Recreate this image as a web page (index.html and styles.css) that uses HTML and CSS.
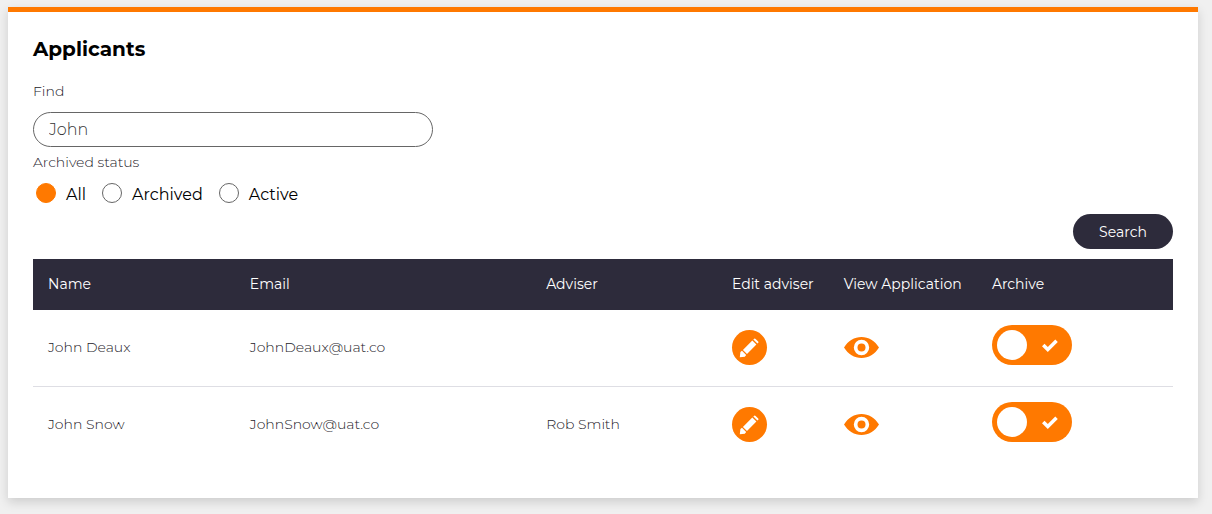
FILE: index.html
```html
<!DOCTYPE html>
<html lang="en">
<head>
<meta charset="utf-8">
<meta name="viewport" content="width=device-width, initial-scale=1">
<title>Applicants</title>
<link rel="stylesheet" href="styles.css">
</head>
<body>
<svg class="sprite" aria-hidden="true">
  <symbol id="pencil" viewBox="0 0 35 35">
    <path d="M7.800 27.200 8.400 22 10 20.800 14.200 25 12.800 26.800Z M10.900 19.900 20.300 10.500 24.400 14.600 15 24Z M21.300 9.500 22.200 8.700Q22.900 8.200 23.600 8.900L26.200 11.500Q26.800 12.200 26.300 12.800L25.400 13.600Z"/>
  </symbol>
  <symbol id="eye" viewBox="0 0 35 21">
    <path fill-rule="evenodd" d="M0 10.500C4 4 10.500 0 17.500 0S31 4 35 10.500C31 17 24.500 21 17.500 21S4 17 0 10.500ZM17.500 2.800a7.700 7.700 0 1 0 0 15.400a7.700 7.700 0 1 0 0-15.400Z"/>
    <circle cx="17.500" cy="10.500" r="4"/>
  </symbol>
  <symbol id="tick" viewBox="0 0 16 13">
    <path d="M0 7.300 2.500 4.800 5.800 8 13.300 0.500 15.800 2.900 5.800 12.900Z"/>
  </symbol>
</svg>
<main class="card">
  <h1 class="title">Applicants</h1>
  <form class="filters">
    <label class="label" for="find">Find</label>
    <input class="field" id="find" type="text" value="John">
    <fieldset class="status">
      <legend class="label">Archived status</legend>
      <div class="options">
        <label class="option"><input class="radio" type="radio" name="status" checked>All</label>
        <label class="option"><input class="radio" type="radio" name="status">Archived</label>
        <label class="option"><input class="radio" type="radio" name="status">Active</label>
      </div>
    </fieldset>
    <button class="search" type="button">Search</button>
  </form>
  <table class="table">
    <colgroup>
      <col class="col-name"><col class="col-email"><col class="col-adviser"><col class="col-edit"><col class="col-view"><col>
    </colgroup>
    <thead>
      <tr><th>Name</th><th>Email</th><th>Adviser</th><th>Edit adviser</th><th>View Application</th><th>Archive</th></tr>
    </thead>
    <tbody>
      <tr>
        <td>John Deaux</td><td>JohnDeaux@uat.co</td><td></td>
        <td><button class="edit" type="button" aria-label="Edit adviser for John Deaux"><svg><use href="#pencil"/></svg></button></td>
        <td><a class="view" href="#deaux" aria-label="View application of John Deaux"><svg><use href="#eye"/></svg></a></td>
        <td><label class="switch"><input class="toggle" type="checkbox" checked aria-label="Archive John Deaux"><svg class="tick"><use href="#tick"/></svg></label></td>
      </tr>
      <tr>
        <td>John Snow</td><td>JohnSnow@uat.co</td><td>Rob Smith</td>
        <td><button class="edit" type="button" aria-label="Edit adviser for John Snow"><svg><use href="#pencil"/></svg></button></td>
        <td><a class="view" href="#snow" aria-label="View application of John Snow"><svg><use href="#eye"/></svg></a></td>
        <td><label class="switch"><input class="toggle" type="checkbox" checked aria-label="Archive John Snow"><svg class="tick"><use href="#tick"/></svg></label></td>
      </tr>
    </tbody>
  </table>
</main>
</body>
</html>
```
FILE: styles.css
```css
* { box-sizing: border-box; }
body {
  margin: 0;
  padding: 7px 14px 16px 8px;
  background: #f0f0f0;
  color: #1c1a28;
  font-family: Montserrat, Inter, "Open Sans", sans-serif;
  font-size: 14px;
  font-weight: 300;
  line-height: 20px;
}
.sprite { display: none; }
.card {
  padding: 25px 25px 35px;
  border-top: 5px solid #ff7900;
  background: #fff;
  box-shadow: 0 4px 10px rgba(0, 0, 0, .15);
}
.title {
  margin: 0 0 20px;
  color: #000;
  font-size: 20px;
  font-weight: 700;
  line-height: 24px;
}
.filters { display: flex; flex-direction: column; align-items: flex-start; }
.label { display: block; padding: 0; }
.field {
  width: 400px;
  max-width: 100%;
  height: 35px;
  margin: 11px 0 5px;
  padding: 0 15px;
  border: 1px solid #666;
  border-radius: 18px;
  background: #fff;
  color: #333;
  font: inherit;
  font-size: 16px;
}
.status { margin: 0; padding: 0; border: 0; }
.options { display: flex; gap: 16px; padding: 11px 3px 7px; }
.option {
  display: flex;
  align-items: flex-start;
  gap: 10px;
  color: #000;
  font-size: 16px;
  font-weight: 400;
  line-height: 24px;
}
.radio {
  appearance: none;
  width: 20px;
  height: 20px;
  margin: 0;
  border: 1px solid #666;
  border-radius: 50%;
}
.radio:checked { border-color: #ff7900; background: #ff7900; }
.search {
  align-self: flex-end;
  width: 100px;
  height: 35px;
  margin-bottom: 10px;
  padding: 0;
  border: 0;
  border-radius: 18px;
  background: #2d2b3b;
  color: #fff;
  font: inherit;
  font-weight: 400;
}
.table { width: 100%; table-layout: fixed; border-collapse: separate; border-spacing: 0; }
.col-name { width: 17.7%; }
.col-email { width: 26%; }
.col-adviser { width: 16.3%; }
.col-edit { width: 9.8%; }
.col-view { width: 13%; }
th, td { padding: 0 0 2px 15px; text-align: left; }
th {
  height: 51px;
  background: #2d2b3b;
  color: #fff;
  font-weight: 400;
}
td { height: 76px; }
tbody tr + tr td { height: 77px; border-top: 1px solid #dedee4; }
.edit {
  display: block;
  width: 35px;
  height: 35px;
  padding: 0;
  border: 0;
  border-radius: 50%;
  background: #ff7900;
}
.edit svg { display: block; width: 35px; height: 35px; fill: #fff; }
.view { display: block; width: 35px; }
.view svg { display: block; width: 35px; height: 21px; fill: #ff7900; }
.switch { display: grid; width: 80px; height: 40px; margin-bottom: 4px; }
.toggle {
  grid-area: 1 / 1;
  appearance: none;
  width: 80px;
  height: 40px;
  margin: 0;
  padding: 5px;
  border-radius: 20px;
  background: #ff7900;
}
.toggle::before {
  content: "";
  display: block;
  width: 30px;
  height: 30px;
  border-radius: 50%;
  background: #fff;
}
.tick {
  grid-area: 1 / 1;
  place-self: center end;
  width: 16px;
  height: 13px;
  margin-right: 14px;
  fill: #fff;
  pointer-events: none;
}
```
